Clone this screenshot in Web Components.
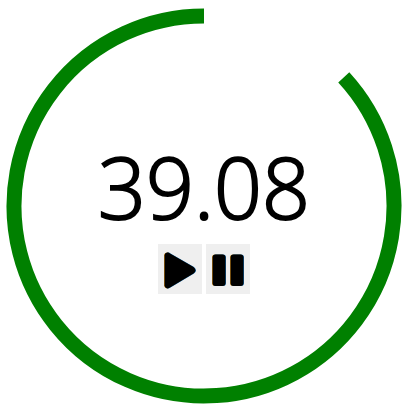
<!DOCTYPE html>
<html lang="en">
<head>
<meta charset="utf-8">
<title>Timer</title>
<style>
body { margin: 0; background: #fff; color: #000; font-family: "Open Sans", "Noto Sans", sans-serif; }
</style>
</head>
<body>
<countdown-timer duration="45" remaining="39.08"></countdown-timer>
<script>
class ProgressRing extends HTMLElement {
  connectedCallback() {
    const fraction = Number(this.getAttribute('fraction'));
    const r = 190;
    const a = 2 * Math.PI * (1 - fraction);
    const x = 198 + r * Math.sin(a);
    const y = 198 - r * Math.cos(a);
    const large = fraction > 0.5 ? 1 : 0;
    this.attachShadow({ mode: 'open' }).innerHTML = `
      <style>
        :host { display: block; }
        svg { display: block; width: 100%; }
      </style>
      <svg viewBox="0 0 396 396" aria-hidden="true">
        <path d="M198 8A${r} ${r} 0 ${large} 0 ${x} ${y}" fill="none" stroke="green" stroke-width="15"/>
      </svg>`;
  }
}
customElements.define('progress-ring', ProgressRing);

class IconButton extends HTMLElement {
  connectedCallback() {
    this.attachShadow({ mode: 'open' }).innerHTML = `
      <style>
        :host { display: block; }
        button { display: block; margin: 0; padding: 0; border: 0; background: #efefef; color: inherit; }
      </style>
      <button type="button" aria-label="${this.getAttribute('label')}"><slot></slot></button>`;
  }
}
customElements.define('icon-button', IconButton);

class CountdownTimer extends HTMLElement {
  connectedCallback() {
    const remaining = this.getAttribute('remaining');
    const duration = this.getAttribute('duration');
    this.attachShadow({ mode: 'open' }).innerHTML = `
      <style>
        :host { display: grid; padding: 8px 9px 9px 6px; }
        progress-ring, .content { grid-area: 1 / 1; }
        .content { place-self: center; padding-top: 12px; }
        .time { font-size: 84px; line-height: 114px; font-weight: 300; -webkit-text-stroke: 2px currentColor; text-align: center; }
        .controls { display: flex; justify-content: center; gap: 4px; }
        svg { display: block; width: 44px; height: 50px; }
      </style>
      <progress-ring fraction="${remaining / duration}"></progress-ring>
      <div class="content">
        <div class="time" role="timer">${remaining}</div>
        <div class="controls">
          <icon-button label="Play">
            <svg viewBox="0 0 44 50" aria-hidden="true">
              <defs><path id="p" d="M6.500 11Q7 8 10 8.500Q11 8.500 12 9.500L35.500 23Q39.500 26.500 35.500 29.500L12 43.500Q8 46 6.500 42Z"/></defs>
              <use href="#p" x="-0.500" fill="#e69a20"/><use href="#p" x="0.500" fill="#1672b8"/><use href="#p"/>
            </svg>
          </icon-button>
          <icon-button label="Pause">
            <svg viewBox="0 0 44 50" aria-hidden="true">
              <defs><g id="b"><rect x="6.500" y="10.500" width="13" height="31.500" rx="3"/><rect x="24.500" y="10.500" width="13" height="31.500" rx="3"/></g></defs>
              <use href="#b" x="-0.500" fill="#e69a20"/><use href="#b" x="0.500" fill="#1672b8"/><use href="#b"/>
            </svg>
          </icon-button>
        </div>
      </div>`;
  }
}
customElements.define('countdown-timer', CountdownTimer);
</script>
</body>
</html>
